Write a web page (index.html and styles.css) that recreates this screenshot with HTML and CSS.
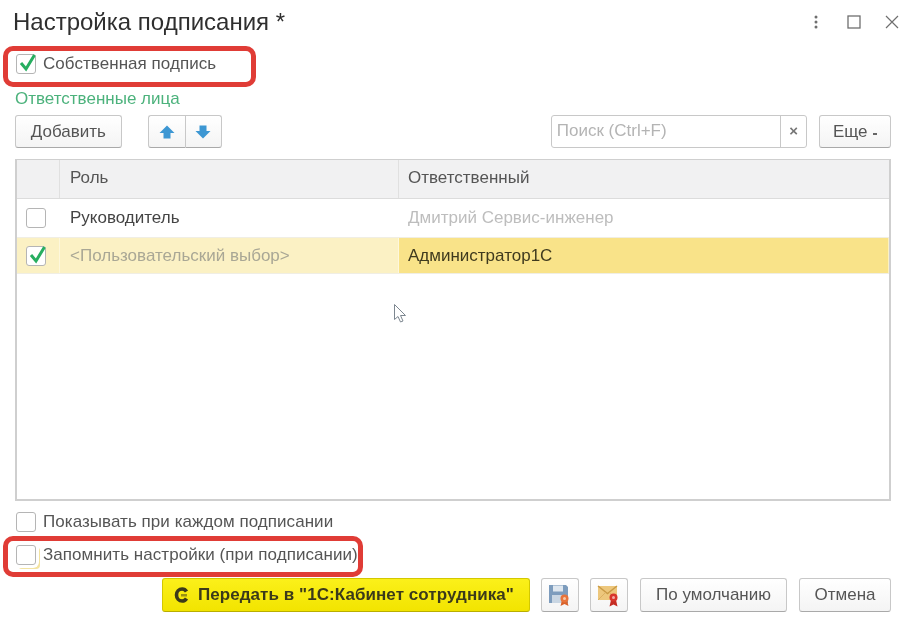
FILE: index.html
```html
<!DOCTYPE html>
<html lang="ru">
<head>
<meta charset="utf-8">
<title>Настройка подписания</title>
<link rel="stylesheet" href="styles.css">
</head>
<body>
<div class="dialog">
  <header class="titlebar">
    <h1 class="title">Настройка подписания *</h1>
    <div class="winctl">
      <svg class="ic-dots" width="6" height="14" viewBox="0 0 6 14"><circle cx="3" cy="2" r="1.500"/><circle cx="3" cy="7" r="1.500"/><circle cx="3" cy="12" r="1.500"/></svg>
      <svg class="ic-max" width="14" height="14" viewBox="0 0 14 14"><rect x="1" y="1" width="12" height="12" fill="none" stroke="#6f6f6f" stroke-width="1.300"/></svg>
      <svg class="ic-close" width="14" height="14" viewBox="0 0 14 14"><path d="M1 1 13 13M13 1 1 13" fill="none" stroke="#6f6f6f" stroke-width="1.200"/></svg>
    </div>
  </header>

  <label class="check-row own hl hl-own">
    <span class="cb"><svg class="tick" width="20" height="20" viewBox="0 0 20 20"><path d="M4 10 9 16 17.500 2" fill="none" stroke="#27ae60" stroke-width="3"/></svg></span>
    <span class="check-label">Собственная подпись</span>
  </label>

  <div class="group-title">Ответственные лица</div>

  <div class="toolbar">
    <button class="btn btn-add">Добавить</button>
    <div class="btn-pair">
      <button class="btn btn-arrow"><svg width="16" height="16" viewBox="0 0 16 16"><path d="M8 1.500 15.500 9H11.500V14.500H4.500V9H.5Z" fill="#3d97d3"/></svg></button>
      <button class="btn btn-arrow"><svg width="16" height="16" viewBox="0 0 16 16"><path d="M8 14.500 15.500 7H11.500V1.500H4.500V7H.5Z" fill="#3d97d3"/></svg></button>
    </div>
    <div class="search">
      <span class="search-text">Поиск (Ctrl+F)</span>
      <span class="search-clear">×</span>
    </div>
    <button class="btn btn-more">Еще <span class="caret"></span></button>
  </div>

  <div class="table">
    <div class="thead">
      <div class="c1"></div>
      <div class="c2">Роль</div>
      <div class="c3">Ответственный</div>
    </div>
    <div class="row">
      <div class="c1"><span class="cb cb-table"></span></div>
      <div class="c2">Руководитель</div>
      <div class="c3 muted">Дмитрий Сервис-инженер</div>
    </div>
    <div class="row selected">
      <div class="c1"><span class="cb cb-table"><svg class="tick" width="20" height="20" viewBox="0 0 20 20"><path d="M4 10 9 16 17.500 2" fill="none" stroke="#27ae60" stroke-width="3"/></svg></span></div>
      <div class="c2 dim">&lt;Пользовательский выбор&gt;</div>
      <div class="c3 current">Администратор1С</div>
    </div>
    <svg class="pointer" width="15" height="21" viewBox="0 0 15 21"><path d="M1.500 1.500V16.500L5 13.500 7.500 19 10 18 7.500 12.500H12.500Z" fill="#fff" stroke="#7d8790"/></svg>
  </div>

  <label class="check-row opt-first">
    <span class="cb"></span>
    <span class="check-label">Показывать при каждом подписании</span>
  </label>
  <label class="check-row opt-second hl hl-remember">
    <span class="cb cb-focus"></span>
    <span class="check-label">Запомнить настройки (при подписании)</span>
  </label>

  <footer class="actions">
    <button class="btn btn-send">
      <svg width="18" height="20" viewBox="0 0 18 20"><path d="M14.500 6.500C13.500 4.800 12 4 10.200 4 7 4 4.500 6.500 4.500 10S7 16 10.200 16C12 16 13.500 15.200 14.500 13.500" fill="none" stroke="#3b3a1a" stroke-width="3.600"/><path d="M9 9H15V11.500H9Z" fill="#3b3a1a" opacity=".5"/></svg>
      <span>Передать в "1С:Кабинет сотрудника"</span>
    </button>
    <button class="btn btn-icon">
      <svg width="24" height="24" viewBox="0 0 24 24"><path d="M1 2H18L20 4V20H1Z" fill="#7d9cbd"/><rect x="5" y="2.500" width="10" height="6" fill="#dfe7ef"/><rect x="4" y="12" width="12" height="8" fill="#c9d6e3"/><path d="M14 17 12.500 23 16.500 21 20.500 23 19 17Z" fill="#d9622b"/><circle cx="16.500" cy="15.500" r="4" fill="#e8743b"/><circle cx="16.500" cy="15.500" r="1.500" fill="#f7c9a8"/></svg>
    </button>
    <button class="btn btn-icon">
      <svg width="24" height="24" viewBox="0 0 24 24"><rect x="1" y="3" width="19" height="14" fill="#edc77c"/><path d="M1 3 10.500 10.500 20 3" fill="none" stroke="#c99a45" stroke-width="1.400"/><path d="M1 17 8.500 9.500M20 17 12.500 9.500" fill="none" stroke="#dcb062" stroke-width="1"/><path d="M14 17 12.500 23.500 16.500 21.500 20.500 23.500 19 17Z" fill="#c42b22"/><circle cx="16.500" cy="14.500" r="4" fill="#d8362c"/><circle cx="16.500" cy="14.500" r="1.500" fill="#f3a9a3"/></svg>
    </button>
    <button class="btn btn-default">По умолчанию</button>
    <button class="btn btn-cancel">Отмена</button>
  </footer>
</div>
</body>
</html>
```
FILE: styles.css
```css
*, *::after { box-sizing: border-box; }
html, body { margin: 0; padding: 0; background: #fff; }
body { width: 905px; height: 620px; overflow: hidden; font-family: "Liberation Sans", Arial, sans-serif; color: #444; }
.dialog { width: 905px; height: 620px; padding: 0 14px 0 15px; filter: blur(.6px); display: flex; flex-direction: column; }

.titlebar { height: 43px; display: flex; align-items: center; justify-content: space-between; margin-left: -2px; margin-right: -8px; }
.title { margin: 0; font-size: 24px; font-weight: 400; color: #2f2f2f; line-height: 1; }
.winctl { display: flex; align-items: center; gap: 27px; }
.ic-dots { fill: #6f6f6f; margin-right: 1px; }
.ic-close { margin-left: -3px; }
.winctl svg { display: block; }

.check-row { display: flex; align-items: center; gap: 7px; height: 20px; font-size: 17px; color: #555; position: relative; }
.cb { flex: none; position: relative; display: block; width: 20px; height: 20px; margin-left: 1px; border: 1px solid #b5b5b5; border-radius: 3px; background: #fff; }
.cb .tick { position: absolute; left: 0; top: -2px; }
.check-label { white-space: nowrap; letter-spacing: .05px; }
.own { margin-top: 11px; }

.hl::after { content: ""; position: absolute; border: 5px solid #e03c36; border-radius: 10px; pointer-events: none; }
.hl-own::after { left: -12px; width: 253px; top: -8px; height: 41px; }
.hl-remember::after { left: -12px; width: 360px; top: -9px; height: 41px; }

.group-title { margin-top: 15px; font-size: 17px; line-height: 19px; color: #4cb27c; }

.toolbar { display: flex; align-items: stretch; height: 33px; margin-top: 7px; }
.btn { font-family: inherit; font-size: 17px; color: #555; padding: 0; background: linear-gradient(#fff, #f4f4f4); border: 1px solid #c8c8c8; border-bottom-color: #a9a9a9; border-radius: 3px; white-space: nowrap; }
.btn-add { width: 107px; }
.btn-pair { display: flex; margin-left: 26px; }
.btn-arrow { width: 37px; display: flex; align-items: center; justify-content: center; }
.btn-arrow:first-child { border-radius: 3px 0 0 3px; border-right: 0; }
.btn-arrow:last-child { border-radius: 0 3px 3px 0; }
.search { display: flex; width: 257px; margin-left: 329px; border: 1px solid #c8c8c8; border-radius: 3px; font-size: 17px; align-items: stretch; }
.search-text { flex: 1; padding-left: 5px; line-height: 30px; color: #b4b4b4; }
.search-clear { width: 26px; border-left: 1px solid #c8c8c8; text-align: center; line-height: 30px; font-size: 15px; font-weight: 700; color: #777; }
.btn-more { width: 72px; margin-left: 12px; }
.caret { display: inline-block; width: 4px; height: 2px; margin-left: 1px; vertical-align: 2px; background: #666; }

.table { position: relative; height: 342px; margin-top: 11px; border: 2px solid #cfcfcf; border-top-width: 1px; font-size: 17px; }
.thead, .row { display: flex; }
.thead { height: 39px; background: #f1f1f2; border-bottom: 1px solid #dcdcdc; color: #555; }
.thead .c2, .thead .c3 { padding-bottom: 3px; }
.row { height: 39px; border-bottom: 1px solid #f0eee4; color: #444; }
.c1, .c2, .c3 { display: flex; align-items: center; white-space: nowrap; }
.c1 { width: 43px; justify-content: center; border-right: 1px solid #e0e0e0; }
.c2 { width: 339px; padding-left: 10px; border-right: 1px solid #e0e0e0; }
.c3 { flex: 1; padding-left: 9px; }
.row .c1, .row .c2 { border-right-color: transparent; }
.row .c1 .cb { margin: 0 0 0 -4px; }
.muted { color: #bdbdbd; }
.selected { background: #fbf1c4; height: 36px; }
.selected .c1, .selected .c2 { border-right-color: #fdf7dc; }
.dim { color: #a9a795; }
.current { background: #f9e389; color: #3f3a1e; margin-right: 1px; }
.pointer { position: absolute; left: 376px; top: 143px; }

.opt-first { margin-top: 11px; }
.opt-second { margin-top: 13px; }
.cb-focus { box-shadow: 0 0 0 3px #fff, 3px 3px 0 1px #f3e3a0; }

.actions { display: flex; align-items: stretch; height: 34px; margin-top: 13px; margin-left: 147px; }
.btn-send { width: 368px; display: flex; align-items: center; gap: 8px; padding-left: 9px; background: linear-gradient(#fbf01a, #f2e400); border-color: #d3c800; border-bottom-color: #b9ae00; font-weight: 700; color: #3b3a1a; font-size: 17px; }
.btn-send span { letter-spacing: .06px; }
.btn-icon { width: 38px; margin-left: 11px; display: flex; align-items: center; justify-content: center; }
.btn-default { width: 147px; margin-left: 12px; }
.btn-cancel { width: 92px; margin-left: 12px; }
```
